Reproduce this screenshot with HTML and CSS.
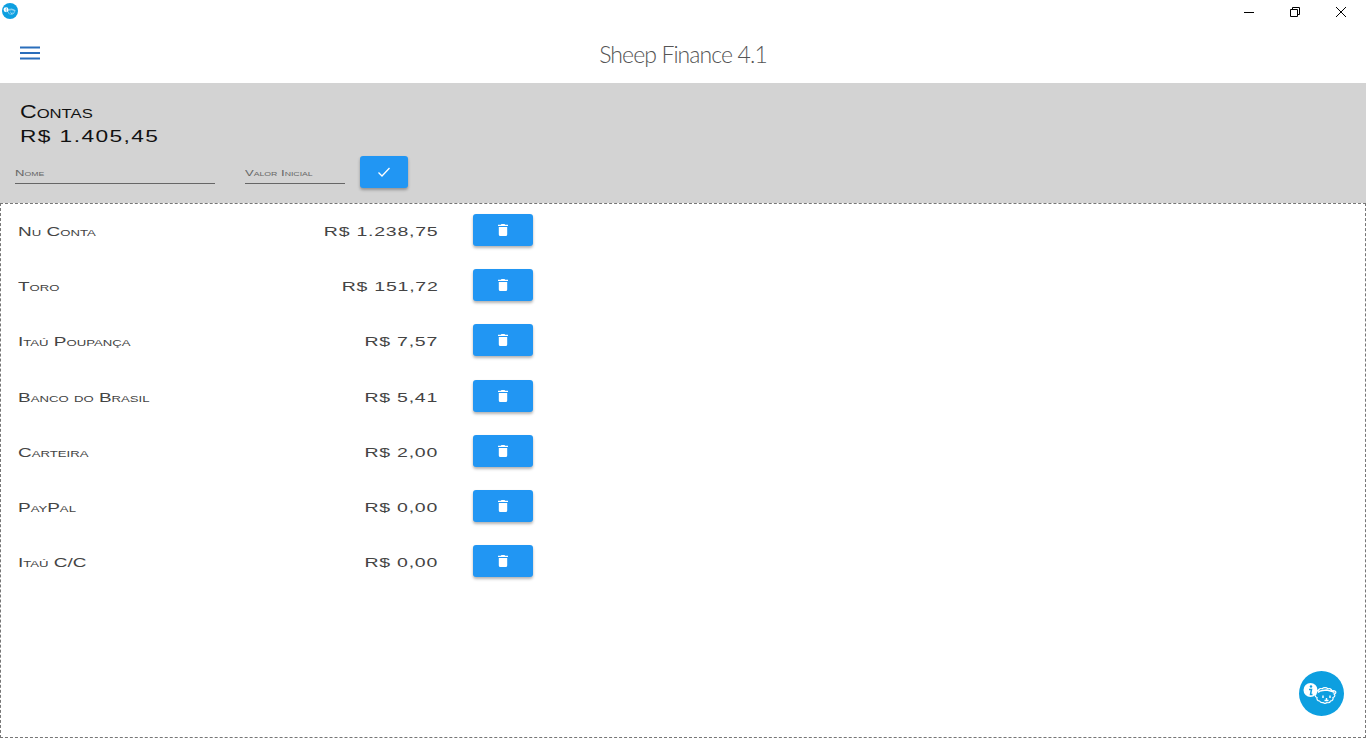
FILE: index.html
```html
<!DOCTYPE html>
<html lang="pt-BR">
<head>
<meta charset="utf-8">
<title>Sheep Finance 4.1</title>
<link rel="stylesheet" href="styles.css">
</head>
<body>
<svg class="defs" width="0" height="0" aria-hidden="true">
  <symbol id="sheep" viewBox="0 0 45 45">
    <circle cx="22.500" cy="22.500" r="22.500" fill="#0d9fe0"/>
    <path d="M20.500 30c-2 0-3-2-2.500-3.500-2-.5-2.500-2.500-1-3.500-2-.5-2.500-2-1-3 1-.8 2-.5 3 0 .5-2 2.500-3 4-2.200 1.500-1.600 4.500-1.600 6 0 1.500-.8 3.500.2 4 2.200 1-.5 2-.8 3 0 1.500 1 1 2.500-1 3 1.500 1 1 3-1 3.500.5 1.500-.5 3.500-2.500 3.500-.5 1.500-2 2-3.500 1.500-1 .8-3 .8-4 0-1.500.5-2.500 0-3.500-1.500z" fill="#0d9fe0" stroke="#fff" stroke-width="1.200"/>
    <path d="M19 21.500c2-2.500 4-1.500 8.500-2.500 3 1 5.500 .5 8 2.500" fill="none" stroke="#fff" stroke-width="1.600"/>
    <path d="M24 24.500v2.500M31 24.500v2.500M27.500 27v2.500M25.500 29.500h4" stroke="#fff" stroke-width="1.400" fill="none"/>
    <circle cx="11.500" cy="19" r="7" fill="#fff"/>
    <circle cx="12" cy="15.500" r="1.200" fill="#0d9fe0"/>
    <path d="M10 18.500h2.500l-1 5h2" stroke="#0d9fe0" stroke-width="1.500" fill="none"/>
  </symbol>
  <symbol id="trash" viewBox="0 0 10 12">
    <path d="M3.500 0h3l.7.8H10V2H0V.8h2.800zM.8 3h8.400v7.500A1.500 1.500 0 0 1 7.700 12H2.300A1.500 1.500 0 0 1 .8 10.500z" fill="#fff"/>
  </symbol>
</svg>
<div class="app">
  <div class="titlebar">
    <svg class="app-icon" width="16" height="16"><use href="#sheep"/></svg>
    <div class="win-controls">
      <svg width="46" height="20" viewBox="0 0 46 20"><path d="M18 10.500h10" stroke="#000" fill="none"/></svg>
      <svg width="46" height="20" viewBox="0 0 46 20"><path d="M18.500 7.500h7v7h-7zM20.500 7.500v-2h7v7h-2" stroke="#000" fill="none"/></svg>
      <svg width="46" height="20" viewBox="0 0 46 20"><path d="M18 5l10 10M28 5L18 15" stroke="#000" fill="none"/></svg>
    </div>
  </div>
  <header class="appbar">
    <svg class="menu-icon" width="20" height="14" viewBox="0 0 20 14"><path d="M0 1.500h20M0 7h20M0 12.500h20" stroke="#2a6ebb" stroke-width="2" fill="none"/></svg>
    <h1 class="brand">Sheep Finance 4.1</h1>
  </header>
  <section class="summary">
    <div class="summary-title"><span class="wide">Contas</span></div>
    <div class="summary-total"><span class="wide">R$ 1.405,45</span></div>
    <form class="entry">
      <label class="field field-name"><span class="wide">Nome</span></label>
      <label class="field field-value"><span class="wide">Valor Inicial</span></label>
      <button class="btn btn-confirm" type="button" aria-label="Confirmar">
        <svg width="14" height="12" viewBox="0 0 14 12"><path d="M1.500 6.500l3.500 3.500 7.500-8" stroke="#fff" stroke-width="1.300" fill="none"/></svg>
      </button>
    </form>
  </section>
  <main class="accounts">
    <div class="row"><span class="name"><span class="wide">Nu Conta</span></span><span class="amount"><span class="wide">R$ 1.238,75</span></span><button class="btn btn-del" type="button" aria-label="Excluir"><svg width="10" height="12"><use href="#trash"/></svg></button></div>
    <div class="row"><span class="name"><span class="wide">Toro</span></span><span class="amount"><span class="wide">R$ 151,72</span></span><button class="btn btn-del" type="button" aria-label="Excluir"><svg width="10" height="12"><use href="#trash"/></svg></button></div>
    <div class="row"><span class="name"><span class="wide">Itaú Poupança</span></span><span class="amount"><span class="wide">R$ 7,57</span></span><button class="btn btn-del" type="button" aria-label="Excluir"><svg width="10" height="12"><use href="#trash"/></svg></button></div>
    <div class="row"><span class="name"><span class="wide">Banco do Brasil</span></span><span class="amount"><span class="wide">R$ 5,41</span></span><button class="btn btn-del" type="button" aria-label="Excluir"><svg width="10" height="12"><use href="#trash"/></svg></button></div>
    <div class="row"><span class="name"><span class="wide">Carteira</span></span><span class="amount"><span class="wide">R$ 2,00</span></span><button class="btn btn-del" type="button" aria-label="Excluir"><svg width="10" height="12"><use href="#trash"/></svg></button></div>
    <div class="row"><span class="name"><span class="wide">PayPal</span></span><span class="amount"><span class="wide">R$ 0,00</span></span><button class="btn btn-del" type="button" aria-label="Excluir"><svg width="10" height="12"><use href="#trash"/></svg></button></div>
    <div class="row"><span class="name"><span class="wide">Itaú C/C</span></span><span class="amount"><span class="wide">R$ 0,00</span></span><button class="btn btn-del" type="button" aria-label="Excluir"><svg width="10" height="12"><use href="#trash"/></svg></button></div>
  </main>
  <button class="fab" type="button" aria-label="Informações">
    <svg width="45" height="45"><use href="#sheep"/></svg>
  </button>
</div>
</body>
</html>
```
FILE: styles.css
```css
* { box-sizing: border-box; }
html, body { margin: 0; height: 100%; background: #fff; overflow: hidden; }
.defs { position: absolute; }
.app { position: relative; width: 1366px; height: 738px; display: flex; flex-direction: column; font-family: "Liberation Sans", sans-serif; font-variant: small-caps; color: #222; }
.wide { display: inline-block; transform: scaleX(1.46); transform-origin: left center; white-space: nowrap; }
.titlebar { height: 30px; flex: none; display: flex; justify-content: space-between; padding: 3px 0 0 2px; }
.app-icon { display: block; }
.win-controls { display: flex; height: 20px; margin-right: 2px; margin-top: -1px; }
.win-controls svg { display: block; }
.appbar { height: 53px; flex: none; position: relative; display: flex; align-items: center; justify-content: center; }
.menu-icon { position: absolute; left: 20px; top: 16px; }
.brand { margin: 0 0 6px 0; font-family: Lato, sans-serif; font-variant: normal; font-weight: 300; font-size: 23px; color: #555; letter-spacing: -0.9px; }
.summary { height: 120px; flex: none; background: #d3d3d3; padding: 18px 15px 0; }
.summary-title { font-size: 18px; line-height: 22px; color: #111; margin-left: 5px; }
.summary-title .wide { transform: scaleX(1.28); }
.summary-total { font-size: 16px; line-height: 28px; color: #111; margin-left: 5px; letter-spacing: 1px; }
.summary-total .wide { transform: scaleX(1.42); }
.entry { display: flex; align-items: flex-start; margin-top: 5px; }
.field { font-size: 9px; line-height: 14px; height: 28px; color: #666; border-bottom: 1px solid #666; display: flex; align-items: flex-end; padding-bottom: 3px; }
.field-name { width: 200px; margin-right: 30px; }
.field-value { width: 100px; margin-right: 15px; }
.field .wide { transform: scaleX(1.45); }
.btn { border: 0; border-radius: 3px; background: #2196f3; box-shadow: 0 2px 3px rgba(0,0,0,.3); display: flex; align-items: center; justify-content: center; padding: 0; }
.btn-confirm { width: 48px; height: 32px; }
.accounts { flex: 1; border: 1px dashed #777; border-width: 1px; }
.row { height: 55.200px; display: flex; align-items: flex-start; padding: 10px 0 0 17px; font-size: 13px; line-height: 35px; color: #444; }
.name { width: 240px; }
.amount { width: 180px; text-align: right; letter-spacing: .5px; }
.amount .wide { transform: scaleX(1.5); transform-origin: right center; }
.btn-del { width: 60px; height: 32px; margin-left: 35px; }
.fab { position: absolute; left: 1299px; top: 671px; width: 45px; height: 45px; border: 0; padding: 0; background: none; border-radius: 50%; }
.fab svg { display: block; }
```
